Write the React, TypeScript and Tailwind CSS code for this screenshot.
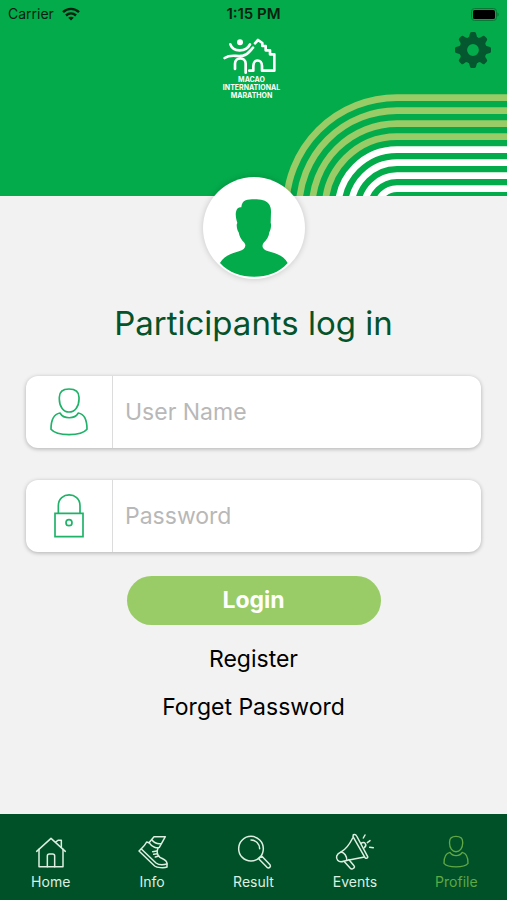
import { useState } from "react";
import type { FormEvent, ReactNode } from "react";

const lines = [
  { r: 111, color: "#99cc66" },
  { r: 98, color: "#99cc66" },
  { r: 85, color: "#99cc66" },
  { r: 72, color: "#99cc66" },
  { r: 59, color: "#ffffff" },
  { r: 46, color: "#ffffff" },
  { r: 33, color: "#ffffff" },
  { r: 20, color: "#ffffff" },
];

const teeth = [0, 45, 90, 135, 180, 225, 270, 315];

function TrackLines() {
  return (
    <svg
      className="absolute right-0 bottom-0 h-[106px] w-[227px]"
      viewBox="0 0 227 106"
      fill="none"
      aria-hidden="true"
    >
      {lines.map((l) => (
        <path
          key={l.r}
          d={`M227 ${118.6 - l.r}H117A${l.r} ${l.r} 0 0 0 ${117 - l.r} 118.6`}
          stroke={l.color}
          strokeWidth="6.6"
        />
      ))}
    </svg>
  );
}

function StatusBar() {
  return (
    <div className="grid h-7 grid-cols-3 items-center px-2 text-sm text-[#06210f]">
      <div className="flex items-center gap-2">
        <span>Carrier</span>
        <svg className="h-[14px] w-[18px]" viewBox="0 0 18 14" fill="none" stroke="currentColor" strokeWidth="2.4" aria-hidden="true">
          <path d="M1 5.2C5.5 .8 12.5 .8 17 5.2" />
          <path d="M4 8.5C7 5.7 11 5.7 14 8.5" />
          <path d="M9 13.6L6.2 10.8C7.8 9.4 10.2 9.4 11.8 10.8Z" fill="currentColor" stroke="none" />
        </svg>
      </div>
      <span className="text-center text-[15px] font-semibold">1:15 PM</span>
      <svg className="h-[13px] w-7 justify-self-end" viewBox="0 0 28 13" aria-hidden="true">
        <rect x=".5" y=".5" width="25" height="12" rx="3" fill="none" stroke="#067a35" />
        <rect x="2" y="2" width="22" height="9" rx="1.6" fill="#000" />
        <path d="M26.4 4.4c1.8.6 1.8 3.6 0 4.2z" fill="#067a35" />
      </svg>
    </div>
  );
}

function Logo() {
  return (
    <div className="flex flex-col items-center pt-[10px] pr-1 text-white">
      <svg
        className="h-[38px] w-[58px]"
        viewBox="100 24 174 114"
        fill="none"
        stroke="currentColor"
        strokeWidth="8"
        strokeLinejoin="round"
        strokeLinecap="round"
        aria-hidden="true"
      >
        <circle cx="151" cy="37" r="9" fill="currentColor" stroke="none" />
        <path d="M122 43C130 66 168 68 181 43" />
        <path d="M105 84C124 71 140 81 160 77C176 73 182 61 190 53" />
        <path d="M136 117V101C136 80 168 80 168 101V128" />
        <path d="M179 122H191V108C191 86 217 86 217 108V122H254V73H241V61H228V48H218V39L205 30L196 40" />
      </svg>
      <p className="text-center text-[7px] leading-[8px] font-bold">
        MACAO
        <br />
        INTERNATIONAL
        <br />
        MARATHON
      </p>
    </div>
  );
}

function GearIcon() {
  return (
    <svg className="size-9" viewBox="-18 -18 36 36" aria-hidden="true">
      <g fill="currentColor">
        {teeth.map((deg) => (
          <path
            key={deg}
            d="M-5.4-12Q-3.4-13-3.2-16Q-3-18-1.4-18H1.4Q3-18 3.2-16Q3.4-13 5.4-12Z"
            transform={`rotate(${deg})`}
          />
        ))}
      </g>
      <circle r="9.6" fill="none" stroke="currentColor" strokeWidth="7.4" />
    </svg>
  );
}

function Avatar() {
  return (
    <div className="relative -mt-[19px] size-[102px] self-center overflow-hidden rounded-full bg-white shadow-[0_0_6px_rgba(0,0,0,0.18)]">
      <svg className="size-full" viewBox="0 0 306 306" aria-hidden="true">
        <path
          fill="#04ab4b"
          d="M128 70C142 66 166 66 180 70C196 74 205 86 204 106L203 138C206 142 203 160 199 166C198 178 191 190 182 197C173 210 182 219 196 223C222 230 244 238 254 258C228 288 192 299 153 299C115 299 78 288 51 258C62 238 84 230 108 223C124 218 132 208 124 197C115 190 109 178 107 166C102 160 99 142 103 138C99 126 97 112 99 104C101 94 108 90 115 91C116 80 120 73 128 70Z"
        />
      </svg>
    </div>
  );
}

function PersonShape() {
  return (
    <>
      <path d="M177 85C197 85 207 94 207 110V116C207 138 194 154 177 154C161 154 148 138 148 116V110C148 94 158 85 177 85Z" />
      <path d="M150 157C161 176 194 176 205 157C222 160 231 174 231 206C222 217 200 222 177 222C154 222 132 217 123 206C123 174 133 160 150 157Z" />
    </>
  );
}

function Field({
  id,
  label,
  type,
  value,
  onChange,
  children,
}: {
  id: string;
  label: string;
  type: string;
  value: string;
  onChange: (v: string) => void;
  children: ReactNode;
}) {
  return (
    <div className="flex h-[72px] overflow-hidden rounded-xl bg-white shadow-[0_1px_4px_rgba(0,0,0,0.28)]">
      <label
        htmlFor={id}
        aria-label={label}
        className="flex w-[87px] shrink-0 items-center justify-center border-r border-[#dcdcdc] text-[#1fb268]"
      >
        {children}
      </label>
      <input
        id={id}
        type={type}
        value={value}
        placeholder={label}
        onChange={(e) => onChange(e.target.value)}
        className="min-w-0 flex-1 px-3 text-[23px] text-black outline-none placeholder:text-[#b8b8b8]"
      />
    </div>
  );
}

const tabs = [
  {
    name: "Home",
    viewBox: "101 86 108 108",
    stroke: 4.5,
    icon: (
      <>
        <path d="M112 138L155 99L198 138" />
        <path d="M119 132V184H191V132" />
        <path d="M144 184V152Q144 146 150 146H160Q166 146 166 152V184" />
        <path d="M169 110L176 105H186V126" />
      </>
    ),
  },
  {
    name: "Info",
    viewBox: "402 86 108 108",
    stroke: 4.5,
    icon: (
      <>
        <path d="M462 94H496L478 126C472 130 456 126 447 112Z" />
        <path d="M456 104C462 112 472 116 482 115" />
        <path d="M447 112L440 110C434 122 426 128 417 137L464 182C470 187 492 189 501 185V174C500 163 488 161 480 156C471 149 470 138 474 127" />
        <path d="M424 131L468 173C476 179 490 179 501 176" />
        <path d="M458 139L470 137M461 147L472 145M466 155L476 152" />
      </>
    ),
  },
  {
    name: "Result",
    viewBox: "107 86 108 108",
    stroke: 4.5,
    icon: (
      <>
        <circle cx="152" cy="130" r="37" />
        <path d="M152 104C166 104 178 116 178 130" />
        <path d="M175 160L184 152L209 178C213 184 206 191 200 186Z" />
      </>
    ),
  },
  {
    name: "Events",
    viewBox: "410 86 108 108",
    stroke: 4.5,
    icon: (
      <>
        <path d="M459 88C464 86 467 88 469 92L502 154C504 158 496 161 494 157L458 94Z" />
        <path d="M457 98C448 116 437 132 422 140C407 146 406 158 412 165C418 172 424 170 430 168C450 162 472 160 492 155" />
        <path d="M422 140C432 142 440 152 439 165" />
        <path d="M431 168L450 189C456 194 466 186 461 181L446 163" />
        <path d="M482 114C492 106 502 118 492 127" />
        <path d="M489 98L494 89M501 112L509 106M508 126L519 127" />
      </>
    ),
  },
  {
    name: "Profile",
    viewBox: "96 74 162 162",
    stroke: 6,
    icon: <PersonShape />,
  },
];

export default function App() {
  const [user, setUser] = useState("");
  const [password, setPassword] = useState("");
  const [active, setActive] = useState("Profile");

  const onSubmit = (e: FormEvent) => {
    e.preventDefault();
  };

  return (
    <div className="flex min-h-screen flex-col bg-[#f2f2f2] font-['Inter',sans-serif]">
      <header className="relative h-[196px] bg-[#04ab4b]">
        <TrackLines />
        <StatusBar />
        <div className="grid grid-cols-3">
          <div className="col-start-2">
            <Logo />
          </div>
          <button type="button" aria-label="Settings" className="mt-1 mr-4 self-start justify-self-end text-[#04572e]">
            <GearIcon />
          </button>
        </div>
      </header>

      <main className="flex flex-1 flex-col">
        <Avatar />
        <h1 className="mt-6 text-center text-[33px] leading-10 text-[#04532b]">Participants log in</h1>

        <form onSubmit={onSubmit} className="mt-[33px] flex flex-col gap-8 px-[26px]">
          <Field id="user" label="User Name" type="text" value={user} onChange={setUser}>
            <svg className="h-12 w-[38px]" viewBox="120 82 114 144" fill="none" stroke="currentColor" strokeWidth="5" strokeLinejoin="round" aria-hidden="true">
              <PersonShape />
            </svg>
          </Field>
          <Field id="password" label="Password" type="password" value={password} onChange={setPassword}>
            <svg className="h-11 w-8" viewBox="131 400 96 132" fill="none" stroke="currentColor" strokeWidth="5" aria-hidden="true">
              <path d="M137 458H221V528H137Z" />
              <path d="M147 458V435C147 392 212 392 212 435V458" />
              <circle cx="179" cy="486" r="9" />
            </svg>
          </Field>
          <button
            type="submit"
            className="-mt-2 h-[49px] w-[254px] self-center rounded-full bg-[#99cc66] text-[23px] font-bold text-white"
          >
            Login
          </button>
        </form>

        <nav className="mt-[10px] flex flex-col items-center text-[23px] leading-[48px] text-black">
          <a href="#register">Register</a>
          <a href="#forget">Forget Password</a>
        </nav>
      </main>

      <nav className="flex h-[86px] bg-[#005128]">
        {tabs.map((tab) => (
          <button
            key={tab.name}
            type="button"
            onClick={() => setActive(tab.name)}
            className={`flex flex-1 flex-col items-center gap-0.5 pt-5 text-sm ${
              active === tab.name ? "text-[#5fa844]" : "text-[#dcefe0]"
            }`}
          >
            <svg
              className="size-9 overflow-visible"
              viewBox={tab.viewBox}
              fill="none"
              stroke="currentColor"
              strokeWidth={tab.stroke}
              strokeLinejoin="round"
              strokeLinecap="round"
              aria-hidden="true"
            >
              {tab.icon}
            </svg>
            {tab.name}
          </button>
        ))}
      </nav>
    </div>
  );
}
